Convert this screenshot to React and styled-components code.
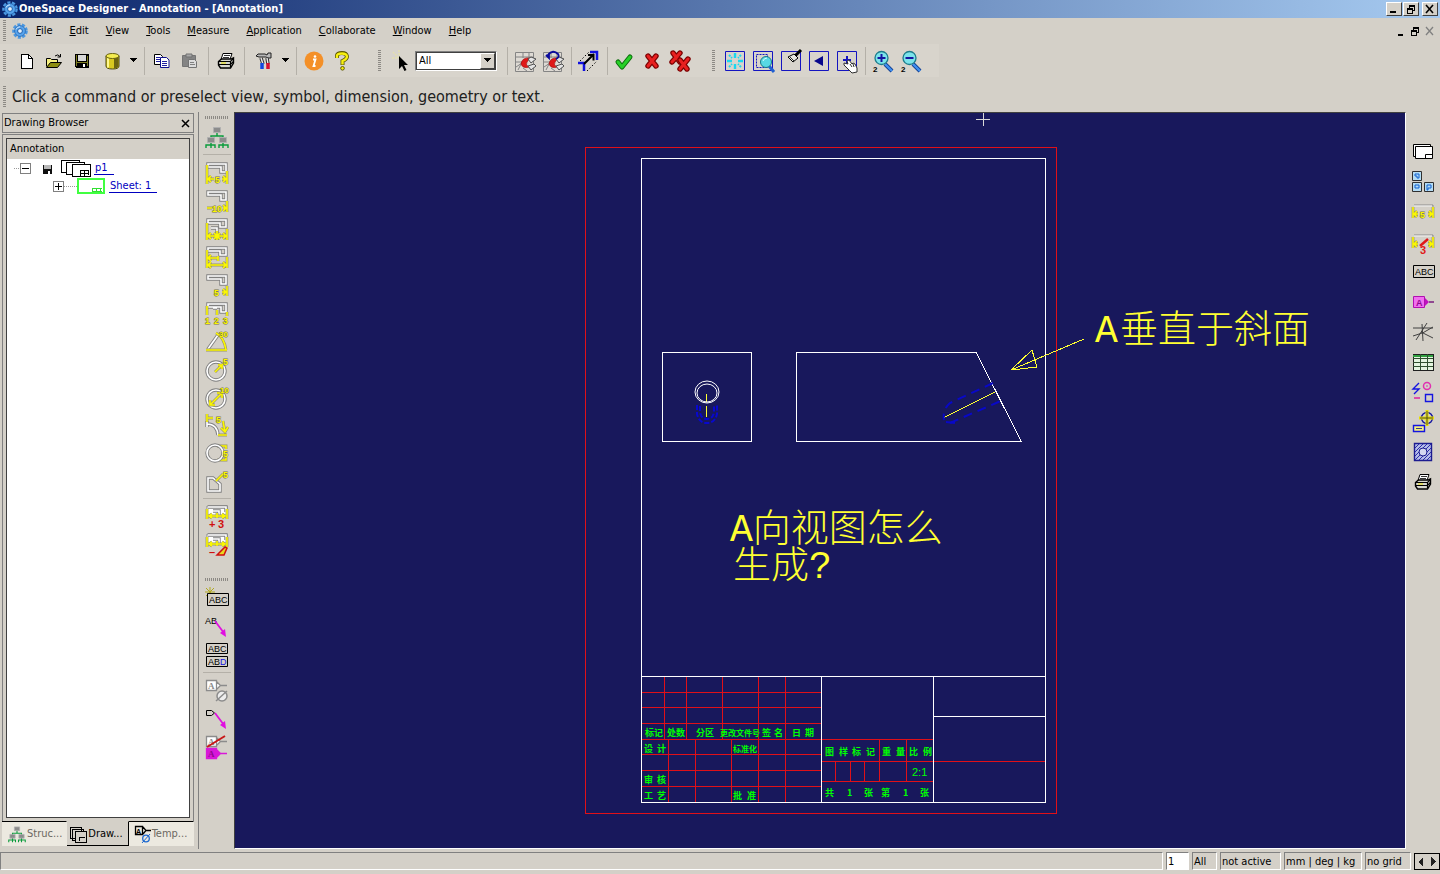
import React from 'react';
import styled, { createGlobalStyle, css } from 'styled-components';

const face = '#d4d0c8';
const lightFace = '#d8d4cc';
const shadow = '#808080';
const navy = '#18185c';
const uiFont = '"DejaVu Sans Condensed", "Noto Sans", sans-serif';

const GlobalStyle = createGlobalStyle`
  * { box-sizing: border-box; }
  html, body { margin: 0; height: 100%; }
  #root { height: 100%; }
  body { background: ${face}; color: #000; font: 11px/14px ${uiFont}; }
  button, input, select { font: inherit; color: inherit; }
`;

/* ---------- frame ---------- */

const AppWindow = styled.div`
  display: flex;
  flex-direction: column;
  min-height: 100vh;
`;

const TitleBar = styled.header`
  display: flex;
  align-items: center;
  height: 18px;
  padding: 0 2px;
  gap: 1px;
  background: linear-gradient(90deg, #0a246a, #a6caf0);
`;

const Title = styled.h1`
  flex: 1;
  margin: 0;
  color: #fff;
  font-size: 11px;
  line-height: 16px;
  font-weight: bold;
`;

const CaptionButton = styled.button`
  display: grid;
  place-items: center;
  width: 16px;
  height: 14px;
  margin-left: ${p => (p.$apart ? '2px' : 0)};
  padding: 0;
  background: ${face};
  border: 1px solid;
  border-color: #fff #404040 #404040 #fff;
`;

const FlatButton = styled.button`
  display: grid;
  place-items: center;
  width: 14px;
  height: 14px;
  padding: 0;
  border: 0;
  background: none;
`;

const MenuBar = styled.nav`
  display: flex;
  align-items: center;
  height: 26px;
  padding-right: 4px;
`;

const MenuButton = styled.button`
  height: 20px;
  padding: 0 9px 0 8px;
  border: 0;
  background: none;
  &::first-letter { text-decoration: underline; }
`;

const Spacer = styled.div`
  flex: 1;
`;

const Grip = styled.span`
  flex: none;
  background: repeating-linear-gradient(
    ${p => (p.$across ? '90deg' : '180deg')}, #8c8984 0 1px, transparent 1px 2px);
  ${p => (p.$across
    ? css`width: 23px; height: 3px; margin: 3px 0 4px;`
    : css`width: 3px; height: 22px; margin: 0 6px 0 3px;`)}
`;

const ToolBar = styled.div`
  display: flex;
  height: 34px;
`;

const ToolGroup = styled.div`
  display: flex;
  align-items: center;
  height: 33px;
  padding-right: ${p => p.$tail}px;
  background: ${lightFace};
`;

const ToolButton = styled.button`
  display: grid;
  place-items: center;
  flex: none;
  width: ${p => (p.$wide ? 32 : 28)}px;
  height: 28px;
  padding: 0;
  border: 0;
  background: none;
`;

const DropButton = styled(ToolButton)`
  width: 12px;
`;

const Divider = styled.span`
  flex: none;
  ${p => (p.$across
    ? css`width: 28px; height: 1px; margin: 3px 0 4px;`
    : css`width: 1px; height: 28px; margin: 0 3px 0 4px;`)}
  background: #b4b0a8;
`;

const FilterBox = styled.div`
  display: flex;
  position: relative;
  width: 82px;
  height: 20px;
  margin-right: 6px;
  background: #fff;
  border: 1px solid;
  border-color: ${shadow} #fff #fff ${shadow};
`;

const FilterSelect = styled.select`
  flex: 1;
  appearance: none;
  padding: 0 18px 0 2px;
  border: 1px solid #404040;
  border-radius: 0;
  background: #fff;
`;

const FilterArrow = styled.span`
  position: absolute;
  top: 1px;
  right: 1px;
  bottom: 1px;
  display: grid;
  place-items: center;
  width: 15px;
  background: ${face};
  border: 1px solid;
  border-color: #fff #404040 #404040 #fff;
  pointer-events: none;
`;

const Prompt = styled.div`
  display: flex;
  align-items: center;
  height: 34px;
  padding-top: 4px;
  color: #202020;
  font-size: 16px;
  line-height: 20px;
`;

/* ---------- work area ---------- */

const WorkArea = styled.main`
  display: flex;
  flex: 1;
`;

const Browser = styled.aside`
  display: flex;
  flex-direction: column;
  width: 199px;
  padding: 1px 4px 3px 2px;
  border-right: 1px solid ${shadow};
`;

const BrowserHead = styled.div`
  display: flex;
  align-items: center;
  justify-content: space-between;
  height: 20px;
  margin-bottom: 1px;
  padding: 0 0 0 1px;
  border: 1px solid ${shadow};
`;

const BrowserTitle = styled.h2`
  margin: 0;
  font-size: 11px;
  line-height: 14px;
  font-weight: normal;
`;

const BrowserBody = styled.div`
  display: flex;
  flex: 1;
  padding: 3px;
  border: 1px solid ${shadow};
  border-bottom: 0;
`;

const TreePane = styled.div`
  flex: 1;
  background: #fff;
  border: 1px solid #404040;
`;

const TreeHead = styled.div`
  height: 20px;
  padding: 3px;
  background: ${face};
`;

const Tree = styled.ul`
  margin: 0;
  padding: 0;
  list-style: none;
`;

const TreeRow = styled.div`
  display: flex;
  align-items: center;
  height: 18px;
  padding-left: ${p => (p.$deep ? 46 : 7)}px;
`;

const Dots = styled.span`
  width: ${p => p.$w}px;
  height: 1px;
  background: repeating-linear-gradient(90deg, #999 0 1px, transparent 1px 2px);
`;

const Expander = styled.button`
  display: grid;
  place-items: center;
  width: 11px;
  height: 11px;
  padding: 0;
  background: #fff;
  border: 1px solid ${shadow};
`;

const TreeIcon = styled.span`
  display: flex;
  margin-left: ${p => p.$gap || 0}px;
`;

const TreeLink = styled.a`
  margin-left: 4px;
  padding: 0 6px 0 1px;
  color: #0000c0;
  line-height: 12px;
  text-decoration: none;
  border-bottom: 1px solid #0000c0;
`;

const Tabs = styled.div`
  display: flex;
  height: 25px;
`;

const Tab = styled.button`
  display: flex;
  align-items: center;
  flex: 1;
  gap: 1px;
  padding: 0 2px 0 ${p => (p.$on ? 2 : 6)}px;
  color: ${p => (p.$on ? '#000' : '#6b6860')};
  background: ${p => (p.$on ? face : '#ece9e0')};
  border: 1px solid;
  border-width: 1px 1px 1px 0;
  border-color: ${p => (p.$on ? `${face} #000 #000` : '#000 transparent transparent')};
  white-space: nowrap;
`;

const SideBar = styled.div`
  display: flex;
  flex-direction: column;
  align-items: center;
  width: ${p => p.$w}px;
  padding-top: ${p => p.$top || 0}px;
`;

const SideGroup = styled.div`
  display: flex;
  flex-direction: column;
  align-items: center;
  margin-bottom: 16px;
`;

const SideButton = styled(ToolButton)`
  height: ${p => (p.$tall ? 30 : 28)}px;
`;

const Canvas = styled.section`
  display: flex;
  flex: 1;
  min-width: 0;
  background: ${navy};
  border: 1px solid;
  border-color: #404040 #fff #fff #404040;
`;

const Sheet = styled.svg`
  flex: 1;
  display: block;
  width: 100%;
  min-width: 0;
  min-height: 600px;
  height: auto;
`;

const Note = styled.text`
  fill: #ffff32;
  font: 300 38px "Liberation Mono", "Noto Sans CJK SC", sans-serif;
`;

const CellText = styled.text`
  fill: #00ff00;
  font: bold ${p => (p.$small ? 8 : 9)}px "Noto Sans CJK SC", sans-serif;
`;

/* ---------- status bar ---------- */

const StatusBar = styled.footer`
  display: flex;
  align-items: center;
  gap: 3px;
  height: 25px;
  padding-bottom: 1px;
`;

const Field = styled.div`
  ${p => (p.$w ? css`width: ${p.$w}px;` : css`flex: 1;`)}
  height: 18px;
  padding: 2px 1px 0;
  border: 1px solid;
  border-color: ${shadow} #fff #fff ${shadow};
  white-space: nowrap;
`;

const SheetInput = styled.input`
  width: 23px;
  height: 18px;
  padding: 0 1px;
  border: 1px solid;
  border-color: ${shadow} #fff #fff ${shadow};
  border-radius: 0;
  background: #fff;
`;

const Pager = styled.div`
  display: flex;
  width: 26px;
  height: 17px;
  border: 1px solid #000;
`;

const PageButton = styled.button`
  display: grid;
  place-items: center;
  flex: 1;
  padding: 0;
  border: 0;
  background: ${face};
`;

/* ---------- icon helpers ---------- */

const IconSvg = styled.svg`
  display: block;
  overflow: visible;
`;
const Icon = ({ w = 24, h = 24, children }) => (
  <IconSvg width={w} height={h} viewBox={`0 0 ${w} ${h}`} fill="none" aria-hidden="true">{children}</IconSvg>
);
const Pix = ({ w, h, children }) => (
  <Icon w={w} h={h}><g shapeRendering="crispEdges">{children}</g></Icon>
);
/* yellow dimension stroke with its grey halo */
const Yel = ({ d }) => (
  <>
    <path d={d} stroke="#989468" strokeWidth="2.8" />
    <path d={d} stroke="#fcf800" strokeWidth="1.6" />
  </>
);
/* part outline: white core in a grey edge */
const Part = ({ d }) => (
  <>
    <path d={d} stroke="#808080" strokeWidth="3.4" />
    <path d={d} stroke="#fff" strokeWidth="1.6" />
  </>
);
const Tiny = ({ x, y, s = 9, c = '#fcf800', halo = '#78744c', children }) => (
  <text x={x} y={y} fontSize={s} fontWeight="bold" fontFamily="Liberation Sans, sans-serif"
    fill={c} stroke={halo} strokeWidth={halo === 'none' ? 0 : 1} paintOrder="stroke">{children}</text>
);
const Down = () => <Pix w={8} h={5}><path d="M0 0h7l-3 4h-1z" fill="#000" /></Pix>;

const Gear = () => (
  <svg width="16" height="16" viewBox="0 0 16 16" aria-hidden="true">
    <circle cx="8" cy="8" r="6.4" fill="none" stroke="#4c98e0" strokeWidth="2.8" strokeDasharray="3 1.47" />
    <circle cx="8" cy="8" r="5.4" fill="#58a4ec" stroke="#2468b8" strokeWidth=".8" />
    <circle cx="8" cy="8" r="2.4" fill="#e4f0fc" stroke="#1c5fae" />
    <path d="M4 6.5A4.200 4.200 0 0 1 8 3.800" stroke="#d0e8ff" fill="none" />
  </svg>
);

const OrgChart = ({ s = 24 }) => (
  <svg width={s} height={s} viewBox="0 0 24 24" fill="none" aria-hidden="true">
    <path d="M12 7v4M6 14v-3h12v3M6 17v4M1 23v-3h9v3M18 17v4M14 23v-3h9v3M6 20v3M18 20v3" stroke="#0a9c3c" strokeWidth="1.4" />
    <path d="M8.500 2.500h7v5h-7zM2.500 12.500h7v5h-7zM14.500 12.500h7v5h-7z" fill="#8c8c8c" stroke="#b0b0b0" />
  </svg>
);

const Printer = () => (
  <Icon w={18} h={18}>
    <path d="M6 1.500h9l-2 6H4z" fill="#fff" stroke="#000" />
    <path d="M7 3.500h6M6 5.500h6" stroke="#000" strokeWidth=".8" />
    <path d="M1.500 9.500l3-2.500h10l2-1v5l-3 5h-10l-2-3z" fill="#d8d8d0" stroke="#000" strokeWidth="1.400" />
    <path d="M1.500 9.500h12l3-3M1.500 12.500h12l3-3M13.500 9.500v6" stroke="#000" strokeWidth="1.200" />
    <path d="M4 11h5" stroke="#e8e000" />
  </Icon>
);

const Floppy = () => (
  <Pix w={16} h={16}>
    <path d="M1 1h14v14H2l-1-1z" fill="#000" />
    <path d="M2 2h1v11h-1zM13 3h1v10h-1z" fill="#7c7c20" />
    <path d="M4 2h8v6h-8z" fill="#d8d8d8" />
    <path d="M3 9h10v1h-10z" fill="#7c7c20" />
    <path d="M9 11h2v3h-2z" fill="#fff" />
  </Pix>
);
const SmallFloppy = () => (
  <Pix w={10} h={12}>
    <path d="M1 3h9v9h-9z" fill="#101010" />
    <path d="M2 3h7v4h-7z" fill="#b8b8b8" />
    <path d="M6 9h2v3h-2z" fill="#fff" />
  </Pix>
);

/* ---------- top toolbar icons ---------- */

const NewDoc = () => (
  <Pix w={14} h={16}><path d="M2 1h7l4 4v10H2z" fill="#fff" stroke="#000" /><path d="M9 1v4h4" stroke="#000" /></Pix>
);
const OpenFolder = () => (
  <Icon w={18} h={16}>
    <path d="M1.500 13.500v-8h4l1 1h6v3" fill="#f6f080" stroke="#000" />
    <path d="M1.500 14.500l4-5h11l-4 5z" fill="#8c8c10" stroke="#000" />
    <path d="M10 3q3-2.500 5 .5M15.500 1v3h-3" stroke="#000" />
  </Icon>
);
const Database = () => (
  <Icon w={18} h={18}>
    <path d="M3 4v10q0 3 6.500 3t6.500-3V4z" fill="#d8c820" stroke="#4c4810" />
    <path d="M11 6v10.500q4-.5 4.500-2.500V5z" fill="#6c6410" />
    <path d="M5 6v9.500" stroke="#fff890" strokeWidth="2" />
    <ellipse cx="9.500" cy="4" rx="6.500" ry="2.500" fill="#f4ec50" stroke="#6c6410" />
  </Icon>
);
const Copy = () => (
  <Icon w={18} h={16}>
    <path d="M1.500 1.500h6l2 2v8h-8z" fill="#fff" stroke="#000" />
    <path d="M3 4.500h4M3 6.500h5M3 8.500h4" stroke="#2020a0" />
    <path d="M7.500 4.500h6l2.500 2.500v7.500h-8.500z" fill="#fff" stroke="#10108c" />
    <path d="M9 8.500h5M9 10.500h5M9 12.500h5" stroke="#2020a0" />
  </Icon>
);
const Paste = () => (
  <Icon w={18} h={16}>
    <path d="M1.500 2.500h13v11h-13z" fill="#848484" stroke="#747474" />
    <path d="M5 1h6v3h-6z" fill="#a8a8a8" stroke="#707070" />
    <path d="M7.500 6.500h6l2 2v6h-8z" fill="#dcdcdc" stroke="#747474" />
    <path d="M9 9.500h4M9 11.500h5" stroke="#808080" />
  </Icon>
);
const Tools = () => (
  <Icon w={20} h={20}>
    <path d="M2 5l2-2h7l2 1 1-2h3v5h-3l-2-1H5z" fill="#b8b8b8" stroke="#202020" />
    <path d="M7 7l2 6M13 7l1 6" stroke="#303030" strokeWidth="3.400" />
    <path d="M7 7l2 6M13 7l1 6" stroke="#e8e8e8" strokeWidth="1.400" />
    <path d="M8 12v6" stroke="#1048e0" strokeWidth="3.500" />
    <path d="M14 12v6" stroke="#d81030" strokeWidth="3.500" />
  </Icon>
);
const Info = () => (
  <Icon w={20} h={20}>
    <circle cx="10" cy="10" r="9.500" fill="#f49028" />
    <path d="M9 8.500h2.500l-2 6.500h2" stroke="#fff" strokeWidth="1.800" />
    <circle cx="11" cy="5.500" r="1.300" fill="#fff" />
  </Icon>
);
const Help = () => (
  <Icon w={16} h={20}>
    <path d="M3 7V4.500Q3.500 2 8 2t5 3.500Q13 8 8.500 10v4" stroke="#5c5800" strokeWidth="4" />
    <path d="M3 7V4.500Q3.500 2.500 8 2.500t5 3Q13 8 8.500 10v3.500" stroke="#f8f010" strokeWidth="2.400" />
    <circle cx="8.500" cy="17.300" r="1.800" fill="#f8f010" stroke="#5c5800" />
  </Icon>
);
const Pointer = () => (
  <Icon w={20} h={24}>
    <path d="M2 3l7 7M8 1v5M1 9h5" stroke="#e4e0b0" strokeWidth="1.500" strokeDasharray="2 1" />
    <path d="M8 7v13l3-3 2.500 5 2-1-2.500-5h4z" fill="#000" />
  </Icon>
);
const Catch = ({ undo }) => (
  <Icon>
    <path d="M2.500 3.500h18v19h-18z" fill="#dedad4" stroke="#848484" />
    <path d="M3 8h17M3 13h6M10 4v5M5 21l4-8M3 18l6-4M16 4v5M10 19l4 3" stroke="#848484" />
    <path d="M8 15q1-7 9-6l-3 4q-2 3 2 5-6 2-8-3z" fill="#e01818" stroke="#900" strokeWidth=".6" />
    <path d="M15 10l3-2 5 2-5 4zM15 17l6-2 2 2-5 4z" fill="#e4e4e4" stroke="#505050" />
    {undo && <path d="M8 4v5l-3-3M6 7l3-3M7 6q5-6 10-1 2 3-2 5" stroke="#0a0a9c" strokeWidth="1.800" />}
  </Icon>
);
const AxisArrow = () => (
  <Icon w={26}>
    <path d="M2 14h6v8M14 3h7v8" stroke="#1010e0" strokeWidth="2.500" />
    <path d="M4 12l9-9M11 22l10-10" stroke="#000" strokeDasharray="1.500 2" />
    <path d="M8 15l10-10M12 6h5.500v5.500" stroke="#000" strokeWidth="2" />
  </Icon>
);
const Check = () => (
  <Icon w={20} h={20}>
    <path d="M3 11l4 5 8-10" stroke="#0c6c0c" strokeWidth="5" strokeLinejoin="round" strokeLinecap="round" />
    <path d="M3 11l4 5 8-10" stroke="#28d028" strokeWidth="3" strokeLinejoin="round" strokeLinecap="round" />
  </Icon>
);
const crossPath = 'M4 5l8 10M12 5L4 15';
const Cross = () => (
  <Icon w={18} h={20}>
    <path d={crossPath} stroke="#7c0000" strokeWidth="5.400" strokeLinecap="round" />
    <path d={crossPath} stroke="#e82020" strokeWidth="3" strokeLinecap="round" />
  </Icon>
);
const DoubleCross = () => (
  <Icon>
    {['M4 4l7 9M11 4L3 13', 'M11 11l7 9M19 10l-8 10'].map(d => (
      <g key={d} strokeLinecap="round">
        <path d={d} stroke="#7c0000" strokeWidth="5.400" />
        <path d={d} stroke="#e82020" strokeWidth="3" />
      </g>
    ))}
  </Icon>
);
const Frame = ({ children }) => (
  <Icon w={24} h={24}>
    <path d="M2.500 2.500h19v19h-19z" stroke="#1414c0" />
    {children}
  </Icon>
);
const FitAll = () => (
  <Frame>
    <path d="M12 4v5M12 15v5M4 12h5M15 12h5" stroke="#18d8f0" strokeWidth="2.400" />
    <path d="M6 6l3 3M18 6l-3 3M6 18l3-3M18 18l-3-3" stroke="#18d8f0" strokeWidth="2" strokeDasharray="2 1" />
  </Frame>
);
const ZoomWindow = () => (
  <Frame>
    <path d="M5.500 5.500h11v13h-11z" stroke="#1414c0" strokeDasharray="2 1" />
    <path d="M18 17l5 6" stroke="#2060d0" strokeWidth="3" />
    <circle cx="15" cy="13" r="5.500" fill="#58d8e4" stroke="#187888" />
    <path d="M12 12q1-3 4-3" stroke="#d8ffff" />
  </Frame>
);
const Redraw = () => (
  <Frame>
    <path d="M22 1l-6 6" stroke="#000" strokeWidth="3" />
    <path d="M9 8l6-3 4 4-5 4z" fill="#e8e8e0" stroke="#000" />
    <path d="M11 8l4 4" stroke="#000" strokeWidth=".8" />
  </Frame>
);
const Previous = () => <Frame><path d="M16 7v10l-9-5z" fill="#08088c" /></Frame>;
const Pan = () => (
  <Frame>
    <path d="M12 7v8M8 11h8" stroke="#1414c0" strokeWidth="2" />
    <path d="M9 14l4 1-1-3 2-1 3 4 1-1 2 1 2 4v4l-5 1-4-4-4-4z" fill="#fff" stroke="#303030" />
    <path d="M15 15l2 3M18 15l1 3" stroke="#303030" />
  </Frame>
);
const Zoom = ({ plus }) => (
  <Icon>
    <path d="M14 15l7 7" stroke="#103c90" strokeWidth="4" />
    <path d="M14 15l7 7" stroke="#4090f0" strokeWidth="2.400" />
    <circle cx="10.500" cy="9" r="6.500" fill="#7ce4ec" stroke="#1c7c8c" strokeWidth="1.300" />
    <path d={plus ? 'M6.500 9h8M10.500 5v8' : 'M6.500 9h8'} stroke="#1414a0" strokeWidth="2" />
    <Tiny x={2} y={23} s={8} c="#000" halo="none">2</Tiny>
  </Icon>
);

/* ---------- dimension and text icons ---------- */

const stepPart = 'M3 3h18v8h-5V6H3z';
const DimSingle = () => (
  <Icon><Part d={stepPart} /><Yel d="M2 4v19M22 10v13M4 18h5M17 18h4M6 15l-3 3 3 3M18 15l3 3-3 3" /><Tiny x={10} y={22}>5</Tiny></Icon>
);
const DimTen = () => (
  <Icon><Part d={stepPart} /><Yel d="M22 12v11M2 19h5M18 19h4M18 16l3 3-3 3" /><Tiny x={7} y={23}>10</Tiny></Icon>
);
const DimChain = () => (
  <Icon><Part d="M3 3h18v7h-6V6H3zM6 11h6v5" /><Yel d="M2 6v17M12 14v9M22 12v11M3 19h18M6 16l-3 3 3 3M9 16l3 3-3 3M18 16l3 3-3 3M15 16l-3 3 3 3" /></Icon>
);
const DimBase = () => (
  <Icon><Part d="M3 3h18v7h-6V6H3z" /><Yel d="M2 5v18M13 11v5M22 12v11M3 13h10M3 20h18M6 10l-3 3 3 3M18 17l3 3-3 3M6 17l-3 3 3 3" /></Icon>
);
const DimSplit = () => (
  <Icon><Part d={stepPart} /><Yel d="M22 13v10M17 19h5M18 16l3 3-3 3" /><Tiny x={9} y={23}>5</Tiny></Icon>
);
const DimCoord = () => (
  <Icon><Part d="M3 3h18v8h-5V6H3zM8 7h4" /><Yel d="M2 5v9M12 9v5M22 11v4" /><Tiny x={0} y={23}>1</Tiny><Tiny x={9} y={23}>2</Tiny><Tiny x={18} y={23}>3</Tiny></Icon>
);
const DimAngle = () => (
  <Icon><Part d="M3 20L13 6" /><Yel d="M1 21h21M11 4q8 4 10 17" /><Tiny x={14} y={8} s={8}>30</Tiny></Icon>
);
const DimRadius = () => (
  <Icon><Part d="M2 14a9 9 0 1 0 18 0a9 9 0 1 0-18 0" /><Yel d="M10 15l8-8M13 8h4v4" /><Tiny x={18} y={8}>5</Tiny></Icon>
);
const DimDiameter = () => (
  <Icon><Part d="M2 14a9 9 0 1 0 18 0a9 9 0 1 0-18 0" /><Yel d="M5 20L17 8M5 15v5h5M12 8h5v5" /><Tiny x={15} y={8} s={8}>10</Tiny></Icon>
);
const DimArc = () => (
  <Icon><Part d="M2 11q10 0 11 11M2 8v6" /><Yel d="M2 1v8M3 5h5M18 8l2 11M16 15l4 4 3-5M13 22h9" /><Tiny x={11} y={10}>5</Tiny></Icon>
);
const DimThread = () => (
  <Icon><Yel d="M12 5h9v3M21 16v3h-9" /><Part d="M2 12a8 8 0 1 0 16 0a8 8 0 1 0-16 0" /><Tiny x={18} y={16}>5</Tiny></Icon>
);
const DimChamfer = () => (
  <Icon><Part d="M3 22V9h5l7 6v7z" /><Yel d="M11 12l7-7" /><Tiny x={18} y={9}>5</Tiny></Icon>
);
const DimEdit = ({ remove }) => (
  <Icon h={26}>
    <path d="M2 2h20v10H2z" fill="#fff" stroke="#8c8c8c" /><Part d="M3 3h18v5M8 7h6v4" />
    <Yel d="M2 5v10M22 5v10M3 12h18M7 10l-3 2 3 2M17 10l3 2-3 2M12 9v5" />
    <Tiny x={4} y={24} c="#d01010" halo="none" s={11}>{remove ? '–' : '+'}</Tiny>
    {remove
      ? <path d="M12 23l8-8 2 1-3 7z" fill="#e8d820" stroke="#d01010" strokeWidth="1.500" />
      : <Tiny x={13} y={24} c="#d01010" halo="none" s={11}>3</Tiny>}
  </Icon>
);
const Label = ({ x, y, children }) => (
  <text x={x} y={y} fontSize="9" fontFamily="Liberation Sans, sans-serif" fill="#000">{children}</text>
);
const AbcBox = ({ spark }) => (
  <Icon>
    {spark && <path d="M5 0v10M0 5h10M1 1l8 8M9 1l-8 8" stroke="#b0a820" />}
    <g transform={spark ? undefined : 'translate(0 -1)'}>
      <path d="M2.500 6.500h21v12h-21z" fill={face} stroke="#000" />
      <Label x="4" y="16">ABC</Label>
    </g>
  </Icon>
);
const Leader = ({ tag }) => (
  <Icon>
    {tag
      ? <path d="M1.500 3.500h5l3 2.500-3 2.500h-5z" stroke="#000" />
      : <Label x="0" y="9">AB</Label>}
    <path d="M10 6l9 12" stroke="#e010e0" strokeWidth="1.800" />
    <path d="M21 22l-6-4 5-4z" fill="#e010e0" />
  </Icon>
);
const AbcAbd = () => (
  <Icon w={24} h={26}>
    <path d="M1.500 1.500h21v10h-21zM1.500 14.500h21v10h-21z" stroke="#000" />
    <Label x="3" y="10">ABC</Label>
    <Label x="3" y="23">AB<tspan fill="#1010e0">D</tspan></Label>
  </Icon>
);
const TagBody = ({ y = 2, fill = '#fff', stroke = '#8c8c8c', ink = '#8c8c8c' }) => (
  <g transform={`translate(0 ${y})`}>
    <path d="M1.500 .500h10v10h-10zM11.500 1.500l4 4-4 4M15 5.500h7" fill={fill} stroke={stroke} strokeWidth="1.300" />
    <text x="3" y="9" fontSize="9" fontWeight="bold" fontFamily="Liberation Serif, serif" fill={ink}>A</text>
  </g>
);
const SymbolOff = () => (
  <Icon><TagBody y={1} /><circle cx="17" cy="17" r="5" fill="#eee" stroke="#8c8c8c" strokeWidth="1.500" /><path d="M11 22L22 12" stroke="#8c8c8c" strokeWidth="1.500" /></Icon>
);
const SymbolSwap = () => (
  <Icon><TagBody y={1} /><TagBody y={13} fill="#d818d8" stroke="#d818d8" ink="#900890" /><path d="M2 12L20 1" stroke="#c81818" strokeWidth="2" /></Icon>
);

/* ---------- right toolbar icons ---------- */

const SheetIcon = () => (
  <Icon><path d="M2.500 4.500h17v12h-17z" fill="#fff" stroke="#000" /><path d="M4.500 6.500h17v12h-17z" fill="#fff" stroke="#000" /><path d="M14.500 18v-3.500h7" stroke="#000" /></Icon>
);
const Views = () => (
  <Icon><path d="M1.500 1.500h9v9h-9zM1.500 12.500h9v9h-9zM13.500 12.500h9v9h-9z" fill="#b4dcf4" stroke="#303030" /><path d="M4 4h4v4h-2V6H4zM4 15h4v3H4zM16 15h4v3h-3v2h-1z" stroke="#1060d0" /></Icon>
);
const RightDim = ({ edit }) => (
  <Icon>
    <path d="M3 5h19v8" stroke="#8c8c8c" /><path d="M3 6h18" stroke="#f4f4f4" />
    <Yel d="M2 7v11M22 7v11M3 14h4M17 14h4M6 11l-3 3 3 3M18 11l3 3-3 3" />
    {edit
      ? <><path d="M9 16l8-7" stroke="#e01818" strokeWidth="2.500" /><Tiny x={9} y={24} c="#e01818" halo="none" s={11}>3</Tiny></>
      : <Tiny x={9} y={18}>5</Tiny>}
  </Icon>
);
const MagentaTag = () => (
  <Icon><path d="M2.500 6.500h11v11h-11z" fill="#f070f0" stroke="#b010b0" /><path d="M14 8l4 4-4 4z" fill="#c010c0" /><path d="M18 12h5" stroke="#904890" strokeWidth="2" /><Tiny x={5} y={16} c="#900890" halo="none">A</Tiny></Icon>
);
const Geometry = () => (
  <Icon><path d="M2 8h20M2 16q10-2 20-9M5 20L16 3M11 4l1 17M10 12l12 6" stroke="#404040" /></Icon>
);
const TableIcon = () => (
  <Pix w={24} h={20}>
    <path d="M2 2h20v16H2z" fill="#e4f4e0" stroke="#202020" /><path d="M2 3h20v2H2z" fill="#30a040" />
    <path d="M2 6h20M2 10h20M2 14h20M9 2v16M16 2v16" stroke="#305030" />
  </Pix>
);
const Sketch = () => (
  <Icon><path d="M8 3l-6 6h6l-5 5" stroke="#1414e0" strokeWidth="1.400" /><path d="M3 18h6" stroke="#e020a0" strokeWidth="1.500" /><circle cx="16" cy="6" r="3.500" stroke="#e030b0" strokeWidth="1.500" /><path d="M15 6h2" stroke="#e030b0" /><path d="M14.500 14.500h7v7h-7z" stroke="#1414e0" strokeWidth="1.400" /></Icon>
);
const Target = () => (
  <Icon><circle cx="16" cy="8" r="5.500" stroke="#1414a0" strokeWidth="1.400" /><path d="M16 0v16M8 8h15" stroke="#e8e000" strokeWidth="3" /><path d="M16 1v14M9 8h13" stroke="#303030" strokeWidth=".8" /><path d="M2.500 15.500h11v6h-11z" fill="#f4f080" stroke="#1414e0" strokeWidth="1.400" /><path d="M5 18.500h6" stroke="#404080" /></Icon>
);
const Hatch = () => (
  <Icon>
    <path d="M3.500 3.500h17v17h-17z" fill="#b4bce8" stroke="#1c1c90" strokeWidth="1.400" />
    <path d="M4 8l4-4M4 12l8-8M4 16l12-12M4 20L20 4M8 20L20 8M12 20l8-8M16 20l4-4" stroke="#2c2ca8" />
    <circle cx="12" cy="12" r="4" fill="#d4d8f0" stroke="#1c1c90" />
  </Icon>
);

/* ---------- tree and tab icons ---------- */

const Sheets = () => (
  <Pix w={30} h={18}>
    <path d="M1 1h18v12H1z" fill="#fff" stroke="#000" /><path d="M6 3h18v12H6z" fill="#fff" stroke="#000" />
    <path d="M12 5h18v12H12z" fill="#fff" stroke="#000" /><path d="M20 11h8v5M20 11v6M20 14h8M24 11v6" stroke="#000" />
  </Pix>
);
const GreenSheet = () => (
  <Pix w={28} h={16}><path d="M1 1h26v14H1z" fill="#fff" stroke="#40ff40" strokeWidth="2" /><path d="M15 10h10M15 13h10M15 10v3M19 10v3M23 10v3" stroke="#30e030" /></Pix>
);
const TabSheets = () => (
  <Pix w={18} h={18}><path d="M1 2h11v11H1zM3 4h11v11H3z" fill={face} stroke="#000" /><path d="M6 6h11v11H6z" fill={face} stroke="#000" /><path d="M10 16v-4h6" stroke="#000" /></Pix>
);
const TabTag = () => (
  <Icon w={16} h={18}><path d="M.500 1.500h7v8h-7zM8 2l3 3.500L8 9M11 5.500h5" stroke="#000" strokeWidth="1.300" /><Tiny x={1} y={9} s={7} c="#000" halo="none">A</Tiny><circle cx="11" cy="13.500" r="3.300" stroke="#1c68d0" strokeWidth="1.300" /><path d="M7 18l8-9" stroke="#1c68d0" /></Icon>
);

/* ---------- data ---------- */

const menus = ['File', 'Edit', 'View', 'Tools', 'Measure', 'Application', 'Collaborate', 'Window', 'Help'];

const leftTools = [
  ['Structure', <OrgChart />], null,
  ['Dimension', <DimSingle />], ['Half dimension', <DimTen />], ['Chain dimension', <DimChain />],
  ['Baseline dimension', <DimBase />], ['Short dimension', <DimSplit />], ['Coordinate dimension', <DimCoord />],
  ['Angle', <DimAngle />], ['Radius', <DimRadius />], ['Diameter', <DimDiameter />],
  ['Arc length', <DimArc />], ['Thread', <DimThread />], ['Chamfer', <DimChamfer />], null,
  ['Add to dimension', <DimEdit />], ['Remove from dimension', <DimEdit remove />],
];
const textTools = [
  ['New text', <AbcBox spark />], ['Text leader', <Leader />], ['Change text', <AbcAbd />], null,
  ['Symbol', <SymbolOff />], ['Symbol leader', <Leader tag />], ['Change symbol', <SymbolSwap />],
];
const rightTools = [
  ['Sheet', <SheetIcon />], ['Views', <Views />], ['Dimensions', <RightDim />], ['Edit dimensions', <RightDim edit />],
  ['Text', <AbcBox />], ['Symbols', <MagentaTag />], ['Geometry', <Geometry />], ['Tables', <TableIcon />],
  ['Sketch', <Sketch />], ['Centre lines', <Target />], ['Hatch', <Hatch />], ['Print', <Printer />],
];

const redLines = `
  M641 692H821M641 707H821M641 723H821M641 739H933M641 754H821M641 770H821M641 786H821
  M664 676V739M686 676V739M722 676V739M758 676V802M785 676V802
  M668 739V802M695 739V802M731 739V802
  M821 761H1045M821 781H933M879 739V781M906 739V781M835 761V781M850 761V781M864 761V781`;

const cells = [
  ['标记', 645, 736], ['处数', 667, 736], ['分区', 696, 736], ['更改文件号', 720, 736, true],
  ['签名', '762 774', 736], ['日期', '792 805', 736],
  ['设计', '644 657', 752], ['标准化', 733, 752, true], ['审核', '644 657', 783],
  ['工艺', '644 657', 799], ['批准', '733 747', 799],
  ['图样标记', '825 839 852 866', 755], ['重量', '882 896', 755], ['比例', '909 923', 755],
  ['共', 825, 796], ['1', 847, 796], ['张', 864, 796], ['第', 881, 796], ['1', 903, 796], ['张', 920, 796],
];

/* ---------- parts ---------- */

const Tool = ({ label, wide, children }) => (
  <ToolButton type="button" aria-label={label} title={label} $wide={wide}>{children}</ToolButton>
);

const SideTools = ({ items, tall }) => items.map((it, i) => (it
  ? <SideButton key={i} type="button" aria-label={it[0]} title={it[0]} $tall={tall}>{it[1]}</SideButton>
  : <Divider key={i} $across />));

const Drawing = () => (
  <Sheet viewBox="235 113 1170 735" role="img" aria-label="Sheet 1">
    <g fill="none" shapeRendering="crispEdges">
      <path d="M585 147H1056V813H585z" stroke="#e01018" />
      <path d={redLines} stroke="#e01018" />
      <path d="M641 158H1045V802H641zM641 676H1045M821 676V802M933 676V802M933 716H1045" stroke="#fff" />
      <path d="M662 352H751V441H662zM796 352H976L1021 441H796z" stroke="#fff" />
      <path d="M976 119H990M983 113V126" stroke="#d8d8d8" />
      <path d="M706 394V402M706 406V417M943 418L995 392" stroke="#ffff32" />
      <path d="M1084 339L1011 370L1032 350L1037 367L1011 370" stroke="#ffff32" />
    </g>
    <g fill="none">
      <ellipse cx="707" cy="392" rx="12" ry="11" stroke="#fff" />
      <ellipse cx="707" cy="393" rx="10" ry="9" stroke="#fff" />
      <path d="M697 405v9q2 9 10 9t10-9v-9M700 406v6q1 7 7 7t7-7v-6" stroke="#0808d0" strokeWidth="2" strokeDasharray="5 2" />
      <path d="M993 383L950 403Q942 410 944 420M950 423L1003 400M946 422l10 1" stroke="#0808c8" strokeWidth="2" strokeDasharray="9 6" />
    </g>
    <Note x="1095" y="342">A<tspan x="1120">垂直于斜面</tspan></Note>
    <Note x="730" y="541">A向视图怎么<tspan x="733" y="578">生成?</tspan></Note>
    {cells.map(([t, x, y, small], i) => <CellText key={i} x={x} y={y} $small={small}>{t}</CellText>)}
    <text x="912" y="776" fontSize="11" fontFamily="Liberation Sans, sans-serif" fill="#00ff00">2:1</text>
  </Sheet>
);

export default function App() {
  return (
    <AppWindow>
      <GlobalStyle />
      <TitleBar>
        <Gear />
        <Title>OneSpace Designer - Annotation - [Annotation]</Title>
        <CaptionButton type="button" aria-label="Minimize"><Pix w={10} h={8}><path d="M1 6h6v2h-6z" fill="#000" /></Pix></CaptionButton>
        <CaptionButton type="button" aria-label="Restore"><Pix w={10} h={9}><path d="M3 0h6v6h-2v3h-6v-6h2zM4 2v1h3v2h1v-3zM2 5v3h4v-3z" fill="#000" fillRule="evenodd" /></Pix></CaptionButton>
        <CaptionButton type="button" aria-label="Close" $apart><Icon w={10} h={8}><path d="M1 0l7 8M8 0l-7 8" stroke="#000" strokeWidth="1.600" /></Icon></CaptionButton>
      </TitleBar>

      <MenuBar aria-label="Main menu">
        <Grip />
        <Gear />
        {menus.map(m => <MenuButton key={m} type="button">{m}</MenuButton>)}
        <Spacer />
        <FlatButton type="button" aria-label="Minimize sheet"><Pix w={10} h={9}><path d="M2 7h5v2h-5z" fill="#000" /></Pix></FlatButton>
        <FlatButton type="button" aria-label="Restore sheet"><Pix w={10} h={9}><path d="M3 0h6v6h-2v3h-6v-6h2zM4 2v1h3v2h1v-3zM2 5v3h4v-3z" fill="#000" fillRule="evenodd" /></Pix></FlatButton>
        <FlatButton type="button" aria-label="Close sheet"><Icon w={9} h={8}><path d="M1 0l7 8M8 0l-7 8" stroke="#808080" strokeWidth="1.300" /></Icon></FlatButton>
      </MenuBar>

      <ToolBar>
        <ToolGroup $tail={19}>
          <Grip />
          <Tool label="New"><NewDoc /></Tool>
          <Tool label="Open"><OpenFolder /></Tool>
          <Tool label="Save"><Floppy /></Tool>
          <Tool label="Database" wide><Database /></Tool>
          <DropButton type="button" aria-label="Database options"><Down /></DropButton>
          <Divider />
          <Tool label="Copy"><Copy /></Tool>
          <Tool label="Paste"><Paste /></Tool>
          <Divider />
          <Tool label="Print"><Printer /></Tool>
          <Divider />
          <Tool label="Customize" wide><Tools /></Tool>
          <DropButton type="button" aria-label="Customize options"><Down /></DropButton>
          <Divider />
          <Tool label="Information"><Info /></Tool>
          <Tool label="Help"><Help /></Tool>
        </ToolGroup>
        <ToolGroup $tail={14}>
          <Grip />
          <Tool label="Select"><Pointer /></Tool>
          <FilterBox>
            <FilterSelect aria-label="Selection filter" defaultValue="All"><option>All</option></FilterSelect>
            <FilterArrow><Down /></FilterArrow>
          </FilterBox>
          <Divider />
          <Tool label="Catch"><Catch /></Tool>
          <Tool label="Reset catch"><Catch undo /></Tool>
          <Divider />
          <Tool label="Direction"><AxisArrow /></Tool>
          <Divider />
          <Tool label="Accept"><Check /></Tool>
          <Tool label="Cancel"><Cross /></Tool>
          <Tool label="Cancel all"><DoubleCross /></Tool>
        </ToolGroup>
        <ToolGroup $tail={14}>
          <Grip />
          <Tool label="Fit all"><FitAll /></Tool>
          <Tool label="Zoom window"><ZoomWindow /></Tool>
          <Tool label="Redraw"><Redraw /></Tool>
          <Tool label="Previous view"><Previous /></Tool>
          <Tool label="Pan"><Pan /></Tool>
          <Divider />
          <Tool label="Zoom in"><Zoom plus /></Tool>
          <Tool label="Zoom out"><Zoom /></Tool>
        </ToolGroup>
      </ToolBar>

      <Prompt>
        <Grip />
        Click a command or preselect view, symbol, dimension, geometry or text.
      </Prompt>

      <WorkArea>
        <Browser>
          <BrowserHead>
            <BrowserTitle>Drawing Browser</BrowserTitle>
            <FlatButton type="button" aria-label="Close browser"><Icon w={10} h={9}><path d="M1 1l7 7M8 1l-7 7" stroke="#000" strokeWidth="1.500" /></Icon></FlatButton>
          </BrowserHead>
          <BrowserBody>
            <TreePane>
              <TreeHead>Annotation</TreeHead>
              <Tree>
                <li>
                  <TreeRow>
                    <Dots $w={6} />
                    <Expander type="button" aria-label="Collapse p1"><Pix w={7} h={7}><path d="M0 3h7v1h-7z" fill="#000" /></Pix></Expander>
                    <TreeIcon $gap={11}><SmallFloppy /></TreeIcon>
                    <TreeIcon $gap={8}><Sheets /></TreeIcon>
                    <TreeLink href="#p1">p1</TreeLink>
                  </TreeRow>
                  <Tree>
                    <li>
                      <TreeRow $deep>
                        <Expander type="button" aria-label="Expand Sheet: 1"><Pix w={7} h={7}><path d="M0 3h3v-3h1v3h3v1h-3v3h-1v-3h-3z" fill="#000" /></Pix></Expander>
                        <Dots $w={13} />
                        <GreenSheet />
                        <TreeLink href="#sheet-1">Sheet: 1</TreeLink>
                      </TreeRow>
                    </li>
                  </Tree>
                </li>
              </Tree>
            </TreePane>
          </BrowserBody>
          <Tabs role="tablist">
            <Tab type="button" role="tab"><OrgChart s={18} />Struc...</Tab>
            <Tab type="button" role="tab" aria-selected="true" $on><TabSheets />Draw...</Tab>
            <Tab type="button" role="tab"><TabTag />Temp...</Tab>
          </Tabs>
        </Browser>

        <SideBar $w={35} $top={1}>
          <SideGroup><Grip $across /><SideTools items={leftTools} /></SideGroup>
          <SideGroup><Grip $across /><SideTools items={textTools} /></SideGroup>
        </SideBar>

        <Canvas><Drawing /></Canvas>

        <SideBar $w={34} $top={25}><SideTools items={rightTools} tall /></SideBar>
      </WorkArea>

      <StatusBar>
        <Field />
        <SheetInput aria-label="Sheet number" defaultValue="1" />
        <Field $w={25}>All</Field>
        <Field $w={61}>not active</Field>
        <Field $w={78}>mm | deg | kg</Field>
        <Field $w={46}>no grid</Field>
        <Pager>
          <PageButton type="button" aria-label="Previous"><Pix w={6} h={9}><path d="M5 0v9l-5-4z" fill="#202020" /></Pix></PageButton>
          <PageButton type="button" aria-label="Next"><Pix w={6} h={9}><path d="M1 0v9l5-4z" fill="#202020" /></Pix></PageButton>
        </Pager>
      </StatusBar>
    </AppWindow>
  );
}
